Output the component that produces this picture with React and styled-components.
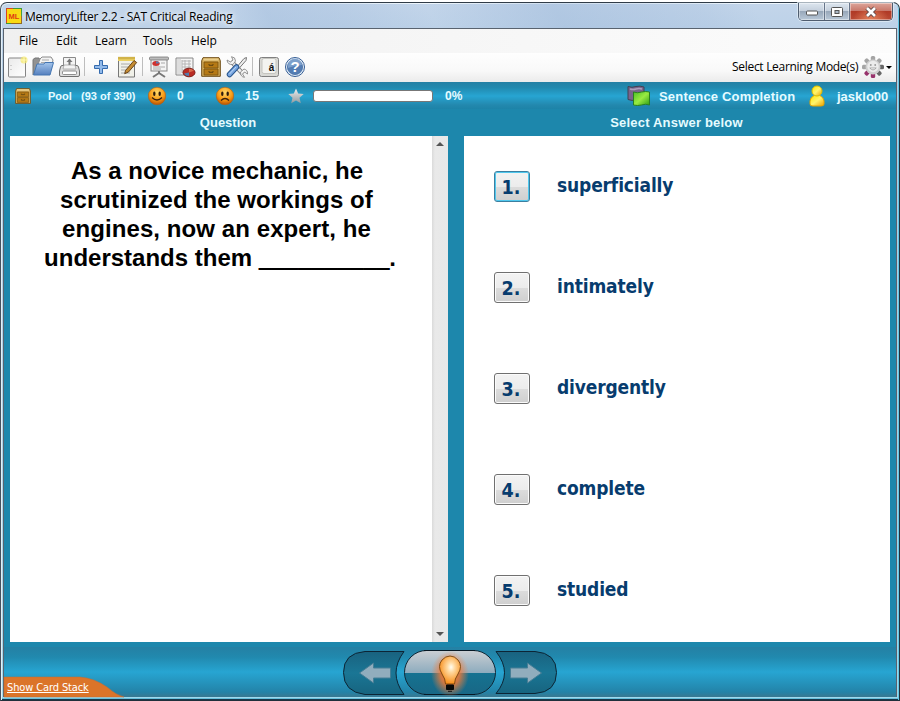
import React from "react";
import styled, { createGlobalStyle } from "styled-components";

const Global = createGlobalStyle`
  *{box-sizing:border-box}
  body{margin:0;background:#fff;overflow:hidden}
  svg{display:block;flex:none;overflow:visible}
`;
const sans = `"Liberation Sans", Arial, sans-serif`;
const ui = `"Open Sans", "Noto Sans", sans-serif`;
const condensed = `"DejaVu Sans Condensed", "DejaVu Sans", sans-serif`;

const Page = styled.div`width:900px;height:701px;padding-top:2px;background:#fff;`;
const Frame = styled.div`
  width:900px;height:699px;display:flex;flex-direction:column;
  border:1px solid #20303c;border-top-color:#303c48;border-left-color:#45525e;border-radius:7px 7px 0 0;
  padding:0 2px 3px;background:linear-gradient(#c3d5ea,#b4cde5 60px,#9fd8ec);
  box-shadow:inset 0 1px #eef6fc,inset 1px 0 #e3eff6,inset -1px 0 #62c6e4,inset 0 -1px #18374a,inset 0 -2px #67c0dc;
`;
const TitleBar = styled.header`
  height:25px;flex:none;display:flex;align-items:flex-start;padding-left:3px;
  background:linear-gradient(60deg,transparent 0 25%,#98b4d755 30%,#9db8d944 38%,transparent 48%,#91afd455 62%,#9db8d933 78%,transparent 84%);
`;
const LogoBox = styled.span`padding-top:5px;`;
const Title = styled.h1`
  margin:5px 0 0 3px;font:12px/18px ${ui};letter-spacing:-.23px;color:#000;white-space:nowrap;
  text-shadow:0 0 5px #fff,0 0 8px #fff;flex:1;
`;
const WindowButtons = styled.div`
  width:95px;height:18px;display:flex;border:1px solid #4f5d70;border-top:0;border-radius:0 0 5px 5px;overflow:hidden;
  margin-right:4px;box-shadow:0 0 0 1px #e6f0f8aa;
`;
const WindowButton = styled.button`
  width:${p => p.$w}px;padding:0;border:0;border-right:${p => p.$close ? 0 : "1px solid #66758a"};
  display:flex;align-items:center;justify-content:center;
  background:${p => p.$close
    ? "radial-gradient(ellipse at 50% 100%,#e4815b 0,transparent 60%),linear-gradient(#dda59a,#c8796c 45%,#b03a26 50%,#b94a34)"
    : "linear-gradient(#dde6ef,#c5d0dd 45%,#98a8ba 50%,#b9c8d8)"};
  box-shadow:inset 0 0 0 1px #ffffff66;
`;
const Client = styled.div`
  flex:1;min-height:0;display:flex;flex-direction:column;border:1px solid #59636f;border-bottom:0;background:#1d87ac;
`;
const MenuBar = styled.nav`
  height:24px;flex:none;display:flex;background:linear-gradient(90deg,#f0f0f0,#fcfcfc);padding-left:15px;
`;
const MenuItem = styled.span`
  width:${p => p.$w}px;font:12px/24px ${ui};white-space:nowrap;color:#000;
`;
const ToolBar = styled.div`
  height:29px;flex:none;display:flex;align-items:center;padding:0 3px 2px 1px;
  background:linear-gradient(#fefefe,#f9f9f9 60%,#ebebeb);
`;
const Slot = styled.span`display:flex;width:${p => p.$w}px;height:24px;align-items:center;justify-content:center;flex:none;`;
const Separator = styled.i`width:1px;height:19px;background:#bdbdbd;margin:0 2px;flex:none;`;
const Spacer = styled.span`flex:1;`;
const ModeLabel = styled.span`font:12px/26px ${ui};width:127px;white-space:nowrap;letter-spacing:-.3px;`;
const Caret = styled.i`border:3px solid transparent;border-top-color:#000;border-bottom:0;margin:2px 1px 0 0;`;
const StatusBar = styled.div`
  height:27px;flex:none;display:flex;align-items:center;padding-left:11px;
  background:linear-gradient(#2480a4,#2189ae 20%,#27a5d2 52%,#2388ae 85%,#1d83a8);
  color:#fff;
`;
const Stat = styled.span`
  width:${p => p.$w}px;flex:none;font:bold ${p => p.$s || 13}px/27px ${sans};letter-spacing:${p => p.$ls || 0}px;
  padding-top:1px;white-space:nowrap;color:#e5fbff;
`;
const Progress = styled.div`width:120px;height:12px;background:#fff;border:1px solid #777;border-radius:3px;margin:0 12px 0 9px;flex:none;`;
const Heads = styled.div`
  height:27px;flex:none;display:grid;grid-template-columns:448px 444px;font:bold 13px/27px ${sans};color:#e5fbff;text-align:center;
`;
const Head = styled.span`letter-spacing:${p => p.$ls || 0}px;padding-left:${p => p.$pl || 0}px;`;
const Panels = styled.main`
  height:506px;flex:none;display:grid;grid-template:506px / 438px 426px;column-gap:16px;padding-left:6px;
`;
const QuestionPanel = styled.section`background:#fff;display:flex;`;
const Question = styled.div`
  width:422px;padding:20px 0 0;text-align:center;font:bold 24px/29px ${sans};color:#000;
`;
const Line = styled.div`letter-spacing:${p => p.$ls || 0}px;white-space:nowrap;padding-right:${p => p.$pr || 0}px;`;
const Blank = styled.span`letter-spacing:-.3px;text-shadow:0 1px #000;`;
const Scroll = styled.div`
  width:16px;background:linear-gradient(90deg,#dadada,#e9e9e9 3px,#e8e8e8);display:flex;flex-direction:column;
  justify-content:space-between;align-items:center;padding:6px 1px 6px 0;
`;
const Answers = styled.section`background:#fff;padding:35px 0 0 30px;display:grid;grid-auto-rows:31px;row-gap:70px;align-content:start;`;
const Answer = styled.div`display:flex;align-items:flex-start;`;
const Num = styled.button`
  width:36px;height:31px;padding:3px 2px 0 0;border:1px solid ${p => p.$on ? "#3c7fa0" : "#707070"};border-radius:3px;
  background:linear-gradient(#f3f3f3,#ececec 50%,#dcdcdc 51%,#cfcfcf);
  box-shadow:inset 0 0 0 1px ${p => p.$on ? "#50c8ee" : "#fbfbfb"};
  font:bold 19.5px/26px ${condensed};color:#073c6e;text-align:center;
`;
const Word = styled.span`
  margin-left:27px;font:bold 19px/28px ${condensed};color:#073c6e;letter-spacing:-.15px;
`;
const Footer = styled.footer`
  margin-top:5px;flex:1;min-height:0;display:grid;grid-template-columns:339px 1fr;
  background:linear-gradient(#2480a4,#2189ae 20%,#27a5d2 50%,#2383a8 90%,#397890);
`;
const StackTab = styled.div`align-self:end;height:21px;display:grid;& > *{grid-area:1/1;}`;
const StackLink = styled.a`
  font:11px/16px ${condensed};color:#fff;text-decoration:underline;padding:4px 0 0 3px;white-space:nowrap;
  letter-spacing:-.12px;z-index:1;
`;

const Ic = ({ w = 22, h = 22, children }) => <svg width={w} height={h} viewBox={`0 0 ${w} ${h}`} fill="none">{children}</svg>;

const HiddenSvg = styled.svg`position:absolute;`;
const Defs = () => (
  <HiddenSvg width="0" height="0">
    <defs>
      <radialGradient id="face" cx=".5" cy=".3" r=".7"><stop offset="0" stopColor="#ffd86a" /><stop offset=".6" stopColor="#f99b14" /><stop offset="1" stopColor="#b95204" /></radialGradient>
      <linearGradient id="paper" x1="0" y1="0" x2="1" y2="1"><stop stopColor="#eaeaea" /><stop offset="1" stopColor="#fff" /></linearGradient>
      <linearGradient id="blue" x1="0" y1="0" x2="0" y2="1"><stop stopColor="#a5c6ec" /><stop offset="1" stopColor="#557fbe" /></linearGradient>
      <linearGradient id="star" x1="0" y1="0" x2="0" y2="1"><stop stopColor="#eee" /><stop offset="1" stopColor="#919ba0" /></linearGradient>
      <linearGradient id="gold" x1="0" y1="0" x2="1" y2="1"><stop stopColor="#ffe800" /><stop offset=".5" stopColor="#fff46c" /><stop offset="1" stopColor="#eda000" /></linearGradient>
      <linearGradient id="lime" x1="0" y1="0" x2="1" y2="1"><stop stopColor="#49be24" /><stop offset=".5" stopColor="#9aeb42" /><stop offset="1" stopColor="#2c9b10" /></linearGradient>
      <radialGradient id="bulb" cx=".55" cy=".4" r=".6"><stop stopColor="#fffdf0" /><stop offset=".3" stopColor="#ffd9a0" /><stop offset="1" stopColor="#f78b16" /></radialGradient>
      <radialGradient id="glow"><stop stopColor="#ff7a28" /><stop offset=".5" stopColor="#fb7a32" stopOpacity=".8" /><stop offset="1" stopColor="#f08040" stopOpacity="0" /></radialGradient>
      <linearGradient id="side" x1="0" y1="0" x2="0" y2="1"><stop stopColor="#19627f" /><stop offset=".5" stopColor="#1a7695" /><stop offset="1" stopColor="#17647f" /></linearGradient>
      <linearGradient id="pill" x1="0" y1="0" x2="0" y2="1"><stop stopColor="#cbcfd3" /><stop offset=".5" stopColor="#8eacbe" /><stop offset=".52" stopColor="#157291" /><stop offset="1" stopColor="#196785" /></linearGradient>
    </defs>
  </HiddenSvg>
);

const Logo = () => <Ic w={16} h={16}><rect x=".5" y=".5" width="15" height="15" fill="#f9da12" stroke="#3e9b38" /><path d="M.5 15V.5H7" stroke="#dc451c" /><path d="M15.5 8v7.5H5" stroke="#97651e" /><text x="8" y="10.5" textAnchor="middle" fontFamily="Liberation Sans" fontWeight="700" fontSize="7.5" fill="#df3a12">ML</text></Ic>;
const NewDoc = () => <Ic w={22}><rect x="2.5" y="2" width="17" height="19" rx="1" fill="url(#paper)" stroke="#858585" /><path d="M5 9v8" stroke="#aaa" strokeDasharray="1 3" /><circle cx="18" cy="4" r="3.5" fill="#f6e96d" opacity=".75" /><path d="M18 1v6m-3-3h6" stroke="#fff8b0" /></Ic>;
const Folder = () => <Ic w={24}><path d="M2 19V3.5L4 2h4l1 2h11v5" fill="#929292" stroke="#777" /><path d="M5 14 9 3 11 1h9l2 3-2 9z" fill="#f3f3f3" stroke="#8a8a8a" /><path d="M11 4h7m-8 2.500h8" stroke="#aaa" /><path d="M6 8h7l1-1.500h8.500L19 19H2.500z" fill="url(#blue)" stroke="#4677b3" /></Ic>;
const Printer = () => <Ic w={22}><path d="M4.500 12V1.500h12V12" fill="#f4f4f4" stroke="#8a8a8a" /><path d="M10.500 9V5" stroke="#777" strokeWidth="2" /><path d="M7.500 6 10.500 2.500 13.500 6z" fill="#777" /><path d="M3 9.500h15q1 0 1.500 1.500l1 4v4q0 1.500-1.500 1.500h-17Q.5 20.500.5 19v-4l1-4Q2 9.500 3 9.500z" fill="#dedede" stroke="#707070" /><path d="M5 9h11l1 4H4z" fill="#f4f4f4" stroke="#999" strokeWidth=".7" /><rect x="3.500" y="15" width="14" height="3.500" rx="1" fill="#fff" stroke="#777" strokeWidth=".8" /></Ic>;
const Plus = () => <Ic w={16} h={16}><path d="M6.500 1.500h3v5h5v3h-5v5h-3v-5h-5v-3h5z" fill="#92baea" stroke="#356bae" strokeLinejoin="round" /></Ic>;
const Note = () => <Ic w={22}><path d="M2.500 3h16v18h-16z" fill="#f1f1e9" stroke="#777" /><path d="M2 1h17v4H2z" fill="#ecd163" /><path d="M2.500 2h16.500" stroke="#b79530" strokeWidth="2.500" strokeDasharray="1 1" /><path d="M5 8h9m-9 3h8m-8 3h5m-5 3h9" stroke="#aaa" /><path d="m9.500 14.500 8.500-10 2.700 2-8.200 9.500-3.800 1.700z" fill="#c58c32" stroke="#5b3910" strokeWidth=".9" /></Ic>;
const Present = () => <Ic w={22}><path d="M11 14v3m0 0-6 4m6-4 6 4" stroke="#777" strokeWidth="2" /><rect x="3" y="3" width="16" height="12" fill="#f4f4f4" stroke="#888" /><rect x="1.500" y="1" width="19" height="3" rx="1" fill="#bcbcbc" stroke="#777" strokeWidth=".8" /><ellipse cx="8" cy="7.500" rx="3.700" ry="2.500" fill="#ce3230" /><path d="M8 7.500V5.300q3 0 3.500 2z" fill="#567db2" /><path d="M13 7h4m-12 4h12m-12 2h8" stroke="#aaa" /></Ic>;
const Table = () => <Ic w={22}><path d="M2 2h17v17H2z" fill="#f5f5f5" stroke="#888" /><path d="M3 3h4v15H3z" fill="#ddd" /><path d="M8 4v13m3-13v13m4-13v13M8 5h9M8 8h9M8 11h9M8 14h9" stroke="#b5b5b5" /><ellipse cx="15" cy="16.500" rx="6" ry="4.300" fill="#b92c25" stroke="#7e1c17" /><path d="M15 16.500V20q-3.500 0-5-2.500z" fill="#517bad" /><path d="M15 16.500v-3.800q3 0 5 2z" fill="#d8694c" /></Ic>;
const Drawer = ({ size = 20 }) => <svg width={size} height={size} viewBox="0 0 20 20" fill="none"><path d="M2 .7h16l1.300 3v15.600H.7V3.700z" fill="#d5ad5a" stroke="#6d4b14" /><path d="M2.500 2.500h15" stroke="#e9cd8b" strokeWidth="2" /><path d="M3 5h14v6H3zM3 12h14v6H3z" fill="#b57915" stroke="#7d5510" strokeWidth=".9" /><path d="M8 7v1.300h4V7M8 14v1.300h4V14" stroke="#5d4212" strokeWidth="1" /></svg>;
const Tools = () => <Ic w={22}><path d="m5 5 12 13" stroke="#777" strokeWidth="4.500" /><path d="m5 5 12 13" stroke="#eee" strokeWidth="2.700" /><path d="M1 4 4.500 6 7 4 5.500.700Q9.500 1 9.500 5L7 8.500Q1.500 9 1 4M14.500 16l3.500-3q4 1 3.500 5l-3-2-2 2 2 3.300q-4-.300-4-5.300" fill="#f4f4f4" stroke="#888" strokeWidth=".9" /><path d="m10.500 11.500 7.500-9 2.500-1-.5 3-7.500 8.500" fill="#eee" stroke="#777" /><path d="m3.500 18.500 7-7.500" stroke="#28568f" strokeWidth="5.500" strokeLinecap="round" /><path d="m3.500 18.500 7-7.500" stroke="#79a7e2" strokeWidth="3.500" strokeLinecap="round" /><path d="m3.500 18 6.500-7" stroke="#bdd7f6" /></Ic>;
const Accent = () => <Ic w={22}><rect x="1.500" y="1.500" width="19" height="19" rx="2" fill="#d9d9d5" stroke="#808080" /><rect x="4" y="2.500" width="14" height="15" rx="2" fill="#f3f3f0" stroke="#c5c5c0" /><text x="13.500" y="15" textAnchor="middle" fontFamily="Liberation Sans" fontWeight="700" fontSize="10" fill="#111">á</text></Ic>;
const Help = () => <Ic w={22}><circle cx="11" cy="11" r="9.500" fill="#e2edf8" stroke="#355d94" /><circle cx="11" cy="11" r="7.600" fill="#547db3" stroke="#466fa6" strokeWidth=".8" /><path d="M4 10a7 7 0 0 1 14-1Q11 9 4 12" fill="#8fafd5" opacity=".7" /><text x="11" y="16.200" textAnchor="middle" fontFamily="Liberation Sans" fontWeight="700" fontSize="15" fill="#fff">?</text></Ic>;
const Gear = () => <Ic w={22}>
  {[0, 45, 90, 135, 180, 225, 270, 315].map(a => <rect key={a} x="8.800" y="0" width="4.400" height="5" rx="1.500" transform={`rotate(${a} 11 11)`} fill={a === 180 || a === 225 ? "#98336c" : a === 90 || a === 135 ? "#676767" : "#a5a5a5"} />)}
  <circle cx="11" cy="11" r="7.500" fill="#cfcfcf" /><circle cx="11" cy="10.500" r="5.700" fill="#ececec" /><circle cx="8.800" cy="9" r=".9" fill="#999" /><circle cx="13.200" cy="9" r=".9" fill="#999" /><path d="M7.800 12h6.400q-3.200 3.800-6.400 0" fill="#fff" stroke="#999" strokeWidth=".8" /></Ic>;
const Face = ({ sad }) => <Ic w={18} h={20}><circle cx="9" cy="10" r="8.700" fill="url(#face)" stroke="#b55f10" strokeWidth=".6" /><ellipse cx="6.300" cy="7.800" rx="1.200" ry="2.200" fill="#2d1b0c" /><ellipse cx="11.700" cy="7.800" rx="1.200" ry="2.200" fill="#2d1b0c" />{sad ? <path d="M5 14.500q4-4 8 0" stroke="#3b210e" strokeWidth="1.300" /> : <path d="M4 11.500q5 5 10 0" stroke="#3b210e" strokeWidth="1.300" />}</Ic>;
const Star = () => <Ic w={16} h={16}><path d="m8 .5 2.200 5.100 5.500.5-4.200 3.700 1.300 5.500L8 12.400l-4.800 2.900 1.300-5.500L.3 6.100l5.500-.5z" fill="url(#star)" /></Ic>;
const Cards = () => <Ic w={23} h={22}><path d="M1 1.500q4 1.500 8 0 4-1 8 .5v13q-4-1-8 0-4 1-8-.5z" fill="#79648c" stroke="#414152" /><path d="M3 4q3 1 6 0 3-1 6 0" stroke="#ad9fba" strokeWidth="1.500" /><path d="M6.500 7q4 1.500 8 0 4-1 8 0v13q-4-1.500-8 0-4 1-8 0z" fill="url(#lime)" stroke="#297f21" /></Ic>;
const Person = () => <Ic w={16} h={22}><path d="M5 10.500Q1 13 1 16v3q0 2 3 2h8q3 0 3-2v-3q0-3-4-5.500" fill="url(#gold)" stroke="#e2a500" /><circle cx="8" cy="6" r="5" fill="url(#gold)" stroke="#e0bd00" /></Ic>;

const NavButtons = () => (
  <svg width="214" height="50" viewBox="343 647 214 50" fill="none">
    <path d="M404 651.500H365Q343.500 653 343.500 672.500T365 694.500H404Q388 673 404 651.500Z" fill="url(#side)" stroke="#0c2535" />
    <path d="M496 651.500H535Q556.500 653 556.500 672.500T535 693.500H496Q513 673 496 651.500Z" fill="url(#side)" stroke="#0c2535" />
    <rect x="404.500" y="650.500" width="91" height="44" rx="22" fill="url(#pill)" stroke="#102735" />
    <path d="M424 650.500h51M424 694.500h51" stroke="#071824" />
    <ellipse cx="450" cy="674" rx="19" ry="23" fill="url(#glow)" />
    <path d="M445.500 684q0-5-3.500-10-5-8 0-14 3.500-4 8-4t8 4q5 6 0 14-3.500 5-3.500 10z" fill="url(#bulb)" stroke="#75430e" strokeWidth=".9" />
    <path d="M446.500 685h7v4.500h-7z" fill="#080808" stroke="#080808" /><path d="M448 691.300h4" stroke="#111" />
    <path d="m359.500 673 14-10v5h17v10h-17v5z" fill="#91adbd" stroke="#467e96" />
    <path d="m541.500 673-14-10v5h-17v10h17v5z" fill="#91adbd" stroke="#467e96" />
  </svg>
);

const answers = ["superficially", "intimately", "divergently", "complete", "studied"];

export default function App() {
  return (
    <Page>
      <Global /><Defs />
      <Frame>
        <TitleBar>
          <LogoBox><Logo /></LogoBox>
          <Title>MemoryLifter 2.2 - SAT Critical Reading</Title>
          <WindowButtons>
            <WindowButton $w={26}><Ic w={12} h={8}><rect x=".5" y="3" width="11" height="4" rx="1" fill="#fff" stroke="#555" /></Ic></WindowButton>
            <WindowButton $w={25}><Ic w={12} h={10}><rect x=".5" y=".5" width="11" height="9" rx="1" fill="#fff" stroke="#555" /><rect x="4" y="3.500" width="4" height="3" fill="#aab7c5" stroke="#555" /></Ic></WindowButton>
            <WindowButton $w={42} $close><Ic w={12} h={10}><path d="m2 1 8 8m0-8-8 8" stroke="#584343" strokeWidth="4.500" /><path d="m2 1 8 8m0-8-8 8" stroke="#fff" strokeWidth="2.700" /></Ic></WindowButton>
          </WindowButtons>
        </TitleBar>
        <Client>
          <MenuBar>
            <MenuItem $w={37}>File</MenuItem><MenuItem $w={39}>Edit</MenuItem><MenuItem $w={48}>Learn</MenuItem><MenuItem $w={48}>Tools</MenuItem><MenuItem $w={40}>Help</MenuItem>
          </MenuBar>
          <ToolBar>
            <Slot $w={23}><NewDoc /></Slot><Slot $w={29}><Folder /></Slot><Slot $w={25}><Printer /></Slot><Separator />
            <Slot $w={27}><Plus /></Slot><Slot $w={26}><Note /></Slot><Separator />
            <Slot $w={27}><Present /></Slot><Slot $w={26}><Table /></Slot><Slot $w={26}><Drawer /></Slot><Slot $w={26}><Tools /></Slot><Separator />
            <Slot $w={27}><Accent /></Slot><Slot $w={26}><Help /></Slot>
            <Spacer /><ModeLabel>Select Learning Mode(s)</ModeLabel><Slot $w={27}><Gear /></Slot><Caret />
          </ToolBar>
          <StatusBar>
            <Slot $w={16}><Drawer size={16} /></Slot><Slot $w={17} />
            <Stat $w={33} $s={11}>Pool</Stat><Stat $w={67} $s={11}>(93 of 390)</Stat>
            <Slot $w={18}><Face /></Slot><Slot $w={11} /><Stat $w={39} $s={12}>0</Stat>
            <Slot $w={18}><Face sad /></Slot><Slot $w={11} /><Stat $w={43} $s={12.500}>15</Stat>
            <Slot $w={16}><Star /></Slot><Progress /><Stat $w={20} $s={12}>0%</Stat>
            <Spacer />
            <Slot $w={23}><Cards /></Slot><Slot $w={9} /><Stat $w={150} $ls={0.18}>Sentence Completion</Stat><Slot $w={16}><Person /></Slot><Slot $w={12} /><Stat $w={59}>jasklo00</Stat>
          </StatusBar>
          <Heads><Head>Question</Head><Head $pl={5} $ls={0.2}>Select Answer below</Head></Heads>
          <Panels>
            <QuestionPanel>
              <Question>
                <Line $pr={8}>As a novice mechanic, he</Line><Line $pr={9} $ls={0.08}>scrutinized the workings of</Line>
                <Line $pr={9} $ls={0.08}>engines, now an expert, he</Line><Line $pr={2}>understands them <Blank>__________</Blank>.</Line>
              </Question>
              <Scroll><Ic w={8} h={4}><path d="M0 4 4 0l4 4z" fill="#555" /></Ic><Ic w={8} h={4}><path d="m0 0 4 4 4-4z" fill="#555" /></Ic></Scroll>
            </QuestionPanel>
            <Answers>{answers.map((word, i) => <Answer key={word}><Num $on={i === 0}>{i + 1}.</Num><Word>{word}</Word></Answer>)}</Answers>
          </Panels>
          <Footer>
            <StackTab>
              <Ic w={120} h={21}><path d="M0 1h76q14 1 27 10 9 8 17 10H0z" fill="#db7429" stroke="#bc6c3b" strokeWidth=".5" /></Ic>
              <StackLink>Show Card Stack</StackLink>
            </StackTab>
            <NavButtons />
          </Footer>
        </Client>
      </Frame>
    </Page>
  );
}
